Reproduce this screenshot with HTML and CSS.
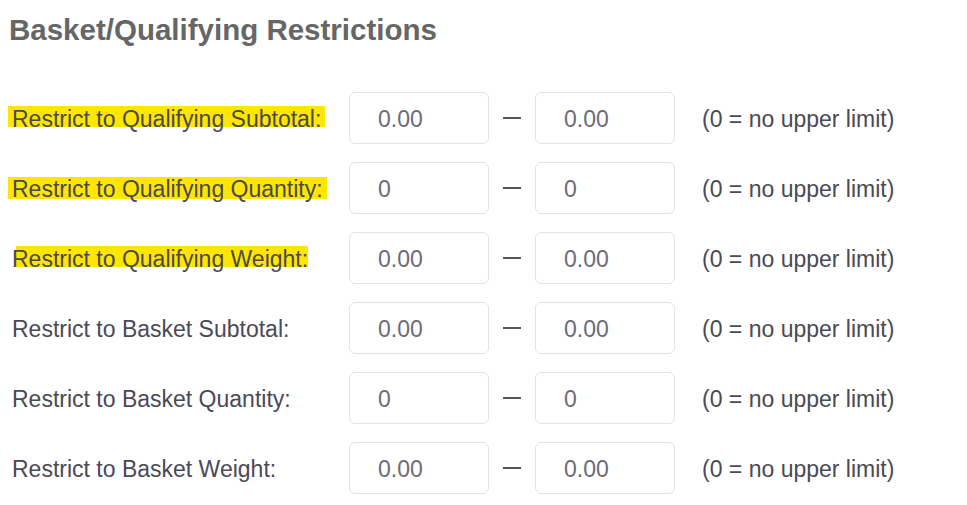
FILE: index.html
```html
<!DOCTYPE html>
<html lang="en">
<head>
<meta charset="utf-8">
<title>Basket/Qualifying Restrictions</title>
<link rel="stylesheet" href="styles.css">
</head>
<body>
<h2 class="title">Basket/Qualifying Restrictions</h2>
<div class="grid">
  <label class="label"><span class="hl hl-pad">Restrict to Qualifying Subtotal:</span></label>
  <input class="field" type="text" value="0.00">
  <span class="dash"></span>
  <input class="field" type="text" value="0.00">
  <span class="note">(0 = no upper limit)</span>

  <label class="label"><span class="hl hl-pad hl-tall">Restrict to Qualifying Quantity:</span></label>
  <input class="field" type="text" value="0">
  <span class="dash"></span>
  <input class="field" type="text" value="0">
  <span class="note">(0 = no upper limit)</span>

  <label class="label"><span class="hl hl-late">Restrict to Qualifying Weight:</span></label>
  <input class="field" type="text" value="0.00">
  <span class="dash"></span>
  <input class="field" type="text" value="0.00">
  <span class="note">(0 = no upper limit)</span>

  <label class="label">Restrict to Basket Subtotal:</label>
  <input class="field" type="text" value="0.00">
  <span class="dash"></span>
  <input class="field" type="text" value="0.00">
  <span class="note">(0 = no upper limit)</span>

  <label class="label">Restrict to Basket Quantity:</label>
  <input class="field" type="text" value="0">
  <span class="dash"></span>
  <input class="field" type="text" value="0">
  <span class="note">(0 = no upper limit)</span>

  <label class="label">Restrict to Basket Weight:</label>
  <input class="field" type="text" value="0.00">
  <span class="dash"></span>
  <input class="field" type="text" value="0.00">
  <span class="note">(0 = no upper limit)</span>
</div>
</body>
</html>
```
FILE: styles.css
```css
html, body {
  margin: 0;
  padding: 0;
  background: #ffffff;
}
body {
  font-family: "Liberation Sans", Arial, sans-serif;
  color: #4a4a55;
}
.title {
  margin: 0;
  padding: 13px 0 0 9px;
  font-size: 29.5px;
  font-weight: bold;
  color: #666666;
  line-height: 33px;
}
.grid {
  margin-top: 46px;
  display: grid;
  grid-template-columns: 349px 140px 46px 140px auto;
  grid-auto-rows: 52px;
  row-gap: 18px;
  align-items: center;
}
.label {
  padding-left: 12px;
  padding-top: 3px;
  font-size: 23px;
  color: #4a4a55;
  white-space: nowrap;
}
.hl {
  background-image: linear-gradient(#ffe600, #ffe600);
  background-repeat: no-repeat;
  background-size: 100% 21px;
  background-position: 0 0;
}
.hl-pad {
  padding-left: 4px;
  padding-right: 4px;
  margin-left: -4px;
}
.hl-tall {
  background-size: 100% 22px;
  background-position: 0 1px;
}
.hl-late {
  background-image: linear-gradient(to right, transparent 4px, #ffe600 4px);
}
.field {
  box-sizing: border-box;
  width: 140px;
  height: 52px;
  margin: 0;
  border: 1px solid #e3e3e6;
  border-radius: 6px;
  padding: 3px 0 0 28px;
  font-family: "Liberation Sans", Arial, sans-serif;
  font-size: 23px;
  color: #6b6b76;
  background: #ffffff;
  outline: none;
}
.dash {
  justify-self: center;
  width: 18px;
  height: 2px;
  background: #55555f;
}
.note {
  padding-left: 27px;
  padding-top: 3px;
  font-size: 23px;
  color: #4a4a55;
  white-space: nowrap;
}
```
